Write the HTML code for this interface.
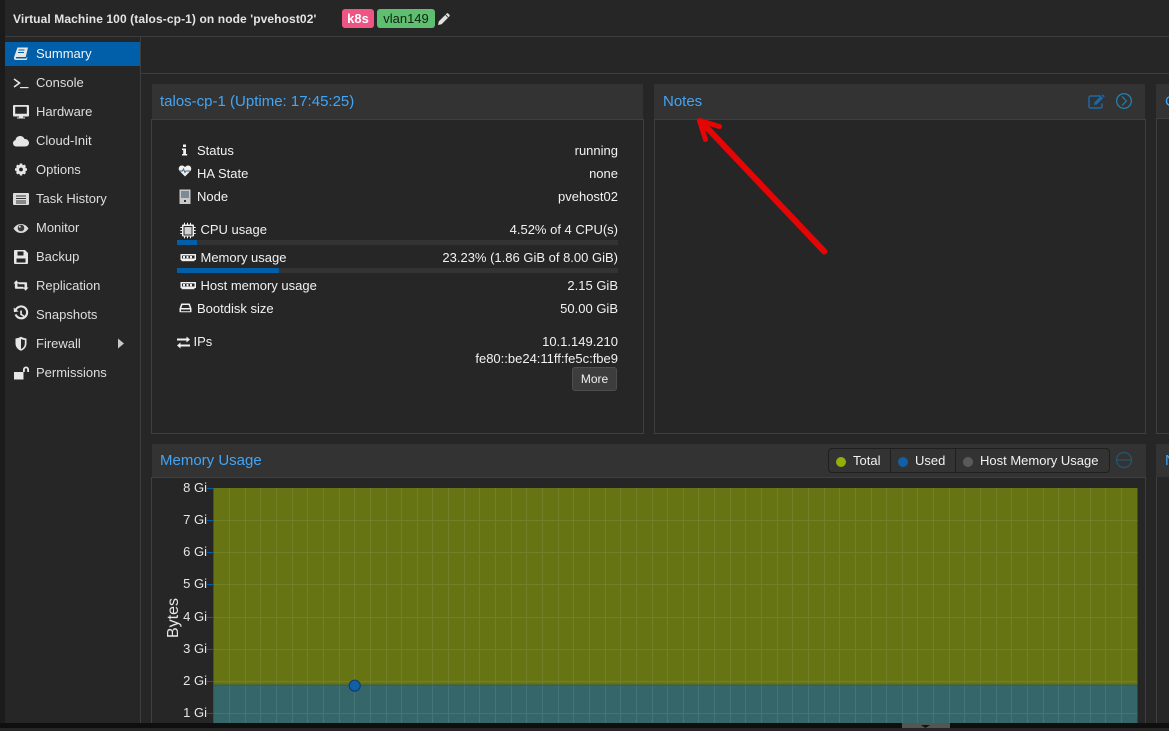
<!DOCTYPE html>
<html><head><meta charset="utf-8"><style>
html,body{margin:0;padding:0;width:1169px;height:731px;overflow:hidden;background:#262626}
body{font:13px/16px "Liberation Sans",Arial,sans-serif;color:#f2f2f2;position:relative}
.a{position:absolute;white-space:nowrap}
.nav{position:absolute;left:36px;color:#dedede;font-size:13px;white-space:nowrap;line-height:16px}
.ic{position:absolute}
.lb{position:absolute;white-space:nowrap;font-size:13px;color:#f2f2f2;line-height:16px;margin-top:1px}
.r{position:absolute;white-space:nowrap;right:551px;font-size:13px;color:#f2f2f2;line-height:16px;margin-top:1px}
.hdr{position:absolute;background:#333;}
.ttl{position:absolute;color:#42a5f5;font-size:15px;line-height:18px;white-space:nowrap;margin-top:1px}
.bar{position:absolute;left:177px;width:441px;height:5px;background:#333}
.bar i{display:block;height:5px;background:#005fa8}
.y{position:absolute;right:962px;font-size:13px;font-weight:400;color:#e6e6e6;line-height:14px;white-space:nowrap;margin-top:1px}
.t{position:absolute;left:207px;width:6px;height:1px;background:#005fa8}
</style></head><body>
<div class="a" style="left:0;top:0;width:5px;height:723px;background:#1b1b1b"></div>
<div class="a" style="left:5px;top:36px;width:1164px;height:1px;background:#3d3d3d"></div>
<div class="a" style="left:140px;top:37px;width:1px;height:686px;background:#3d3d3d"></div>
<div class="a" style="left:141px;top:73px;width:1028px;height:1px;background:#3d3d3d"></div>

<div class="a" style="left:13px;top:11px;font-size:12px;font-weight:700;color:#e4e4e4;letter-spacing:.1px">Virtual Machine 100 (talos-cp-1) on node 'pvehost02'</div>
<div class="a" style="left:342px;top:9px;width:32px;height:19px;background:#ee5585;border-radius:3px;color:#fff;text-align:center;font-size:13px;line-height:19px;font-weight:700">k8s</div>
<div class="a" style="left:377px;top:9px;width:58px;height:19px;background:#5fbf70;border-radius:3px;color:#10240f;text-align:center;font-size:13px;line-height:19px">vlan149</div>
<svg class="ic" style="left:437px;top:12px" width="14" height="14" viewBox="0 0 14 14"><path d="M1 13l.8-3.6L9.6 1.6a1.2 1.2 0 0 1 1.7 0l1.1 1.1a1.2 1.2 0 0 1 0 1.7L4.600 12.200z" fill="#e0e0e0"/><path d="M8.600 2.800l2.600 2.600" stroke="#262626" stroke-width=".8"/></svg>

<!-- nav -->
<div class="a" style="left:5px;top:42px;width:135px;height:24px;background:#005fa8"></div>
<div class="nav" style="top:46px;color:#f2f2f2">Summary</div>
<div class="nav" style="top:75px">Console</div>
<div class="nav" style="top:104px">Hardware</div>
<div class="nav" style="top:133px">Cloud-Init</div>
<div class="nav" style="top:162px">Options</div>
<div class="nav" style="top:191px">Task History</div>
<div class="nav" style="top:220px">Monitor</div>
<div class="nav" style="top:249px">Backup</div>
<div class="nav" style="top:278px">Replication</div>
<div class="nav" style="top:307px">Snapshots</div>
<div class="nav" style="top:336px">Firewall</div>
<div class="nav" style="top:365px">Permissions</div>

<svg class="a" style="left:0;top:0" width="140" height="385" viewBox="0 0 140 385">
 <g fill="#e6e6e6">
 <!-- book -->
 <path d="M17.500 47.500h10.500l-2.300 9.500H16.500c-1 0-1 1.500.2 1.500h9.600l.3-1 1-.3-1 2.800H16c-1.800 0-2.300-1.500-1.900-3z"/>
 <path d="M18.500 50h6M18 52.500h6" stroke="#005fa8" stroke-width="1"/>
 <!-- console -->
 <path d="M14 79l5.500 4-5.500 4" fill="none" stroke="#e6e6e6" stroke-width="1.600"/><rect x="20" y="87" width="8.500" height="1.200"/>
 <!-- monitor -->
 <path d="M14 105h14a1 1 0 0 1 1 1v9.500a1 1 0 0 1-1 1h-5v1h2v1h-8v-1h2v-1h-5a1 1 0 0 1-1-1V106a1 1 0 0 1 1-1zM15.200 106.800v7h11.600v-7z" fill-rule="evenodd"/>
 <!-- cloud -->
 <path d="M17 146.500c-2.500 0-4-1.500-4-3.300 0-1.600 1-2.800 2.500-3.100.3-2.700 2.500-4.100 4.600-4.100 2 0 3.700 1.100 4.400 3 2.500-.2 4.500 1.600 4.500 3.900 0 2.100-1.600 3.600-4 3.600z"/>
 <!-- gear -->
 <circle cx="21" cy="169.500" r="5"/>
 <path d="M21 163.500v12M15 169.500h12M16.800 165.300l8.400 8.400M25.200 165.300l-8.400 8.400" stroke="#e6e6e6" stroke-width="2.400"/>
 <circle cx="21" cy="169.500" r="1.900" fill="#262626"/>
 <!-- list -->
 <path d="M14 193h14a1 1 0 0 1 1 1v10a1 1 0 0 1-1 1H14a1 1 0 0 1-1-1v-10a1 1 0 0 1 1-1z" fill="#dcdcdc"/>
 <path d="M16 196h10M16 198.500h10M16 201h10M16 203h10" stroke="#333" stroke-width="1"/>
 <!-- eye -->
 <path d="M13.500 228.500c2-3 4.600-4.500 7.500-4.500s5.500 1.500 7.500 4.500c-2 3-4.600 4.500-7.500 4.500s-5.500-1.500-7.500-4.500z" fill="#dcdcdc"/>
 <circle cx="21" cy="228" r="3.300" fill="#3a3a3a"/><circle cx="19.800" cy="226.800" r="1" fill="#dcdcdc"/>
 <!-- save -->
 <path d="M15 250h10l3 3v10a1 1 0 0 1-1 1H15a1 1 0 0 1-1-1v-12a1 1 0 0 1 1-1zM17.500 251.500v4h6v-4zM16.500 258.500v4h9v-4z" fill-rule="evenodd"/>
 <!-- retweet -->
 <path d="M13.500 283.500l2.800-3.200 2.800 3.200h-1.600v3.200h5.500l1.800 2.100H16a1.100 1.100 0 0 1-1.100-1.100v-4.200zM28.500 287.500l-2.800 3.200-2.800-3.200h1.600v-3.200h-5.500l-1.800-2.100H26a1.100 1.100 0 0 1 1.100 1.100v4.200z"/>
 <!-- history -->
 <path d="M15.200 308.800a7 7 0 1 1-.6 6l2-.7a4.900 4.900 0 1 0 .2-4l1.800 1.400-4.700.6-.2-4.600z"/><path d="M20.200 310.500h1.700v3.500l2.500 1.500-.9 1.400-3.300-2.100z"/>
 <!-- shield -->
 <path d="M15.500 338.500c2-.3 3.800-.9 5.500-1.800 1.700.9 3.500 1.500 5.500 1.800v5c0 3.500-2.300 6-5.500 7.300-3.200-1.300-5.500-3.800-5.500-7.300zM21 339v10c2.300-1 3.800-3 3.800-5.500v-3.500c-1.400-.2-2.700-.5-3.800-1z" fill-rule="evenodd"/>
 <!-- unlock -->
 <path d="M14 372h9.500v7.500H14zM23 372v-2.500a3 3 0 0 1 6 0v2.500h-1.800v-2.500a1.200 1.200 0 0 0-2.400 0v2.500z"/>
 <path d="M118 338.500l6 5-6 5z" fill="#c8c8c8"/>
 </g>
</svg>

<!-- status panel -->
<div class="hdr" style="left:152px;top:84px;width:491px;height:35px"></div>
<div class="a" style="left:151px;top:119px;width:493px;height:315px;border:1px solid #3f3f3f;box-sizing:border-box"></div>
<div class="ttl" style="left:160px;top:92px">talos-cp-1 (Uptime: 17:45:25)</div>

<div class="lb" style="left:197px;top:142px">Status</div>
<div class="lb" style="left:197px;top:165px">HA State</div>
<div class="lb" style="left:197px;top:188px">Node</div>
<div class="lb" style="left:200.500px;top:221px">CPU usage</div>
<div class="lb" style="left:200.500px;top:249px">Memory usage</div>
<div class="lb" style="left:200.500px;top:277px">Host memory usage</div>
<div class="lb" style="left:197px;top:300px">Bootdisk size</div>
<div class="lb" style="left:193.500px;top:333px">IPs</div>

<div class="r" style="top:142px">running</div>
<div class="r" style="top:165px">none</div>
<div class="r" style="top:188px">pvehost02</div>
<div class="r" style="top:221px">4.52% of 4 CPU(s)</div>
<div class="r" style="top:249px">23.23% (1.86 GiB of 8.00 GiB)</div>
<div class="r" style="top:277px">2.15 GiB</div>
<div class="r" style="top:300px">50.00 GiB</div>
<div class="r" style="top:333px">10.1.149.210</div>
<div class="r" style="top:350px">fe80::be24:11ff:fe5c:fbe9</div>
<div class="bar" style="top:240px"><i style="width:20px"></i></div>
<div class="bar" style="top:268px"><i style="width:102px"></i></div>
<div class="a" style="left:572px;top:367px;width:45px;height:24px;box-sizing:border-box;background:#3d3d3d;border:1px solid #4d4d4d;border-radius:3px;text-align:center;line-height:22px;font-size:12px;color:#f0f0f0">More</div>

<svg class="a" style="left:170px;top:140px" width="30" height="215" viewBox="170 140 30 215">
 <g fill="#f0f0f0">
 <path d="M183 144.500h3v2.500h-3zM182 148.500h4v5.500h1.200v1.500h-5.200V154h1.200v-4H182z"/>
 <path d="M185 176.500l-5.300-5.400c-2.100-2.300-.5-5.600 2.200-5.600 1.300 0 2.400.7 3.100 1.600.7-.9 1.800-1.600 3.100-1.600 2.700 0 4.300 3.300 2.200 5.600z"/>
 <path d="M179.500 171h3l1-2 1.500 3.500 1-1.500h4" fill="none" stroke="#3f6a80" stroke-width="1"/>
 <rect x="179.500" y="189.500" width="11" height="14.500" fill="#c9c9c9"/><g fill="#7d8a96"><rect x="181" y="191" width="8" height="7"/><rect x="184" y="200" width="2" height="2" fill="#333"/></g>
 <g>
 <path d="M183 224.500h10a1 1 0 0 1 1 1v10a1 1 0 0 1-1 1h-10a1 1 0 0 1-1-1v-10a1 1 0 0 1 1-1zM183.500 226v9.500h9V226z" fill-rule="evenodd"/>
 <rect x="184.500" y="227" width="7" height="7.500" fill="#d0d0d0"/>
 <path d="M184 222.800h1v1.700h-1zM187 222.800h1v1.700h-1zM190 222.800h1v1.700h-1zM184 236.500h1v1.700h-1zM187 236.500h1v1.700h-1zM190 236.500h1v1.700h-1zM180.300 227h1.700v1h-1.700zM180.300 230h1.700v1h-1.700zM180.300 233h1.700v1h-1.700zM194 227h1.700v1H194zM194 230h1.700v1H194zM194 233h1.700v1H194z"/>
 </g>
 <path d="M181 254h14.500a.5.500 0 0 1 .5.500v5.500h-15.500v-5.500a.5.500 0 0 1 .5-.5zM182 255.500v3h12.500v-3z" fill-rule="evenodd"/>
 <path d="M183 256h2v2.200h-2zM186.500 256h2v2.200h-2zM190 256h2v2.200h-2z"/><rect x="181.500" y="260" width="13" height="1.200"/>
 <path d="M181 282h14.500a.5.500 0 0 1 .5.500v5.500h-15.500v-5.500a.5.500 0 0 1 .5-.5zM182 283.500v3h12.500v-3z" fill-rule="evenodd"/>
 <path d="M183 284h2v2.200h-2zM186.500 284h2v2.200h-2zM190 284h2v2.200h-2z"/><rect x="181.500" y="288" width="13" height="1.200"/>
 <path d="M182.500 303.500h6.500a1 1 0 0 1 1 .7l1.500 4.300v3a.8.800 0 0 1-.8.800H180.300a.8.800 0 0 1-.8-.8v-3l1.500-4.300a1 1 0 0 1 1.500-.7zM182.500 305l-1.200 3h8.500l-1.200-3zM181 309.500v1.800h9v-1.800z" fill-rule="evenodd"/>
 <path d="M177 338.500h9.500V336.500l3.500 3-3.500 3v-2H177zM190 344.500h-9.500v-2l-3.500 3 3.500 3v-2H190z"/>
 </g>
</svg>

<!-- notes panel -->
<div class="hdr" style="left:654px;top:84px;width:491px;height:35px"></div>
<div class="a" style="left:654px;top:119px;width:492px;height:315px;border:1px solid #3f3f3f;box-sizing:border-box"></div>
<div class="ttl" style="left:663px;top:92px">Notes</div>
<svg class="a" style="left:1085px;top:90px" width="50" height="22" viewBox="1085 90 50 22">
 <path d="M1100.500 96h-10a1.500 1.500 0 0 0-1.500 1.500v9a1.500 1.500 0 0 0 1.500 1.500h10a1.500 1.500 0 0 0 1.500-1.500v-3" fill="none" stroke="#1e6aa8" stroke-width="1.400"/>
 <path d="M1094 105l.5-2.700 6.300-6.300 2.200 2.200-6.300 6.300zM1101.500 95.300l1-1 2.200 2.200-1 1z" fill="#1e6aa8"/>
 <circle cx="1124" cy="101" r="7.300" fill="none" stroke="#2187bd" stroke-width="1.200"/>
 <path d="M1122 96.500l4.500 4.500-4.500 4.500" fill="none" stroke="#2187bd" stroke-width="1"/>
</svg>

<!-- right clipped panels -->
<div class="hdr" style="left:1156px;top:84px;width:13px;height:34px"></div>
<div class="a" style="left:1156px;top:118px;width:14px;height:316px;border:1px solid #3f3f3f;box-sizing:border-box"></div>
<div class="ttl" style="left:1165px;top:92px">C</div>
<div class="hdr" style="left:1156px;top:444px;width:13px;height:33px"></div>
<div class="a" style="left:1156px;top:477px;width:1px;height:246px;background:#3f3f3f"></div>
<div class="ttl" style="left:1165px;top:451px">N</div>

<!-- memory panel -->
<div class="hdr" style="left:152px;top:444px;width:994px;height:33px"></div>
<div class="a" style="left:151px;top:477px;width:995px;height:1px;background:#3f3f3f"></div>
<div class="a" style="left:151px;top:477px;width:1px;height:246px;background:#3f3f3f"></div>
<div class="a" style="left:1145px;top:477px;width:1px;height:246px;background:#3f3f3f"></div>
<div class="ttl" style="left:160px;top:451px">Memory Usage</div>

<div class="a" style="left:828px;top:448px;width:282px;height:25px;box-sizing:border-box;background:#333;border:1px solid #1f1f1f;border-radius:4px"></div>
<div class="a" style="left:890px;top:449px;width:1px;height:23px;background:#1f1f1f"></div>
<div class="a" style="left:955px;top:449px;width:1px;height:23px;background:#1f1f1f"></div>
<div class="a" style="left:836px;top:457px;width:10px;height:10px;border-radius:50%;background:#94ae0a"></div>
<div class="a" style="left:898px;top:457px;width:10px;height:10px;border-radius:50%;background:#115fa6"></div>
<div class="a" style="left:963px;top:457px;width:10px;height:10px;border-radius:50%;background:#5a5a5a"></div>
<div class="a" style="left:853px;top:453px;font-size:13px">Total</div>
<div class="a" style="left:915px;top:453px;font-size:13px">Used</div>
<div class="a" style="left:980px;top:453px;font-size:13px">Host Memory Usage</div>
<svg class="a" style="left:1114px;top:450px" width="20" height="20" viewBox="0 0 20 20"><circle cx="10" cy="10" r="7.500" fill="none" stroke="#24566f" stroke-width="1.200"/><path d="M3 10h14" stroke="#24566f" stroke-width="1.200"/></svg>

<!-- chart -->
<svg class="a" style="left:213px;top:488px" width="925" height="235" viewBox="0 0 925 235" shape-rendering="crispEdges">
 <rect width="924.500" height="235" fill="#667414"/>
 <rect y="197" width="924.500" height="38" fill="#35676a"/>
 <path stroke="#fff" stroke-opacity=".09" stroke-width="1" fill="none" d="M16.500 0V235M32.500 0V235M47.500 0V235M63.500 0V235M79.500 0V235M94.500 0V235M110.500 0V235M126.500 0V235M141.500 0V235M157.500 0V235M173.500 0V235M188.500 0V235M204.500 0V235M219.500 0V235M235.500 0V235M251.500 0V235M266.500 0V235M282.500 0V235M298.500 0V235M313.500 0V235M329.500 0V235M345.500 0V235M360.500 0V235M376.500 0V235M392.500 0V235M407.500 0V235M423.500 0V235M439.500 0V235M454.500 0V235M470.500 0V235M485.500 0V235M501.500 0V235M517.500 0V235M532.500 0V235M548.500 0V235M564.500 0V235M579.500 0V235M595.500 0V235M611.500 0V235M626.500 0V235M642.500 0V235M658.500 0V235M673.500 0V235M689.500 0V235M704.500 0V235M720.500 0V235M736.500 0V235M751.500 0V235M767.500 0V235M783.500 0V235M798.500 0V235M814.500 0V235M830.500 0V235M845.500 0V235M861.500 0V235M877.500 0V235M892.500 0V235M908.500 0V235M0 32.500H924.500M0 64.500H924.500M0 96.500H924.500M0 129.500H924.500M0 161.500H924.500M0 193.500H924.500M0 225.500H924.500"/>
 <rect y="196.500" width="924.500" height="1" fill="#2f5b55"/>
</svg>
<div class="a" style="left:213px;top:488px;width:1px;height:235px;background:#005fa8"></div>
<svg class="a" style="left:346px;top:677px" width="18" height="18" viewBox="0 0 18 18"><circle cx="8.700" cy="8.700" r="5.500" fill="#115fa6" stroke="#0d3f6e" stroke-width="1.200"/></svg>

<div class="t" style="top:488px"></div><div class="t" style="top:520px"></div><div class="t" style="top:552px"></div><div class="t" style="top:584px"></div><div class="t" style="top:617px"></div><div class="t" style="top:649px"></div><div class="t" style="top:681px"></div><div class="t" style="top:713px"></div>
<div class="y" style="top:480px">8 Gi</div>
<div class="y" style="top:512px">7 Gi</div>
<div class="y" style="top:544px">6 Gi</div>
<div class="y" style="top:576px">5 Gi</div>
<div class="y" style="top:609px">4 Gi</div>
<div class="y" style="top:641px">3 Gi</div>
<div class="y" style="top:673px">2 Gi</div>
<div class="y" style="top:705px">1 Gi</div>
<div class="a" style="left:150px;top:610px;width:48px;height:16px;text-align:center;font-size:16px;line-height:16px;color:#e6e6e6;transform:rotate(-90deg)">Bytes</div>

<!-- bottom -->
<div class="a" style="left:0;top:723px;width:1169px;height:5px;background:#0f0f0f"></div>
<div class="a" style="left:0;top:728px;width:1169px;height:3px;background:#262626"></div>
<div class="a" style="left:902px;top:723px;width:48px;height:5px;background:#555"></div>
<svg class="a" style="left:920px;top:725px" width="12" height="5" viewBox="0 0 12 5"><path d="M1 0h9l-4.500 3z" fill="#111"/></svg>

<!-- arrow -->
<svg class="a" style="left:0;top:0" width="1169" height="731" viewBox="0 0 1169 731">
 <g fill="none" stroke="#e60505" stroke-width="6" stroke-linecap="round" stroke-linejoin="round">
 <path d="M824.300 251.500L701 121.500"/>
 <path d="M719.500 126.500L699.500 120.500 705.500 139.500" stroke-width="5"/>
 </g>
</svg>
</body></html>
